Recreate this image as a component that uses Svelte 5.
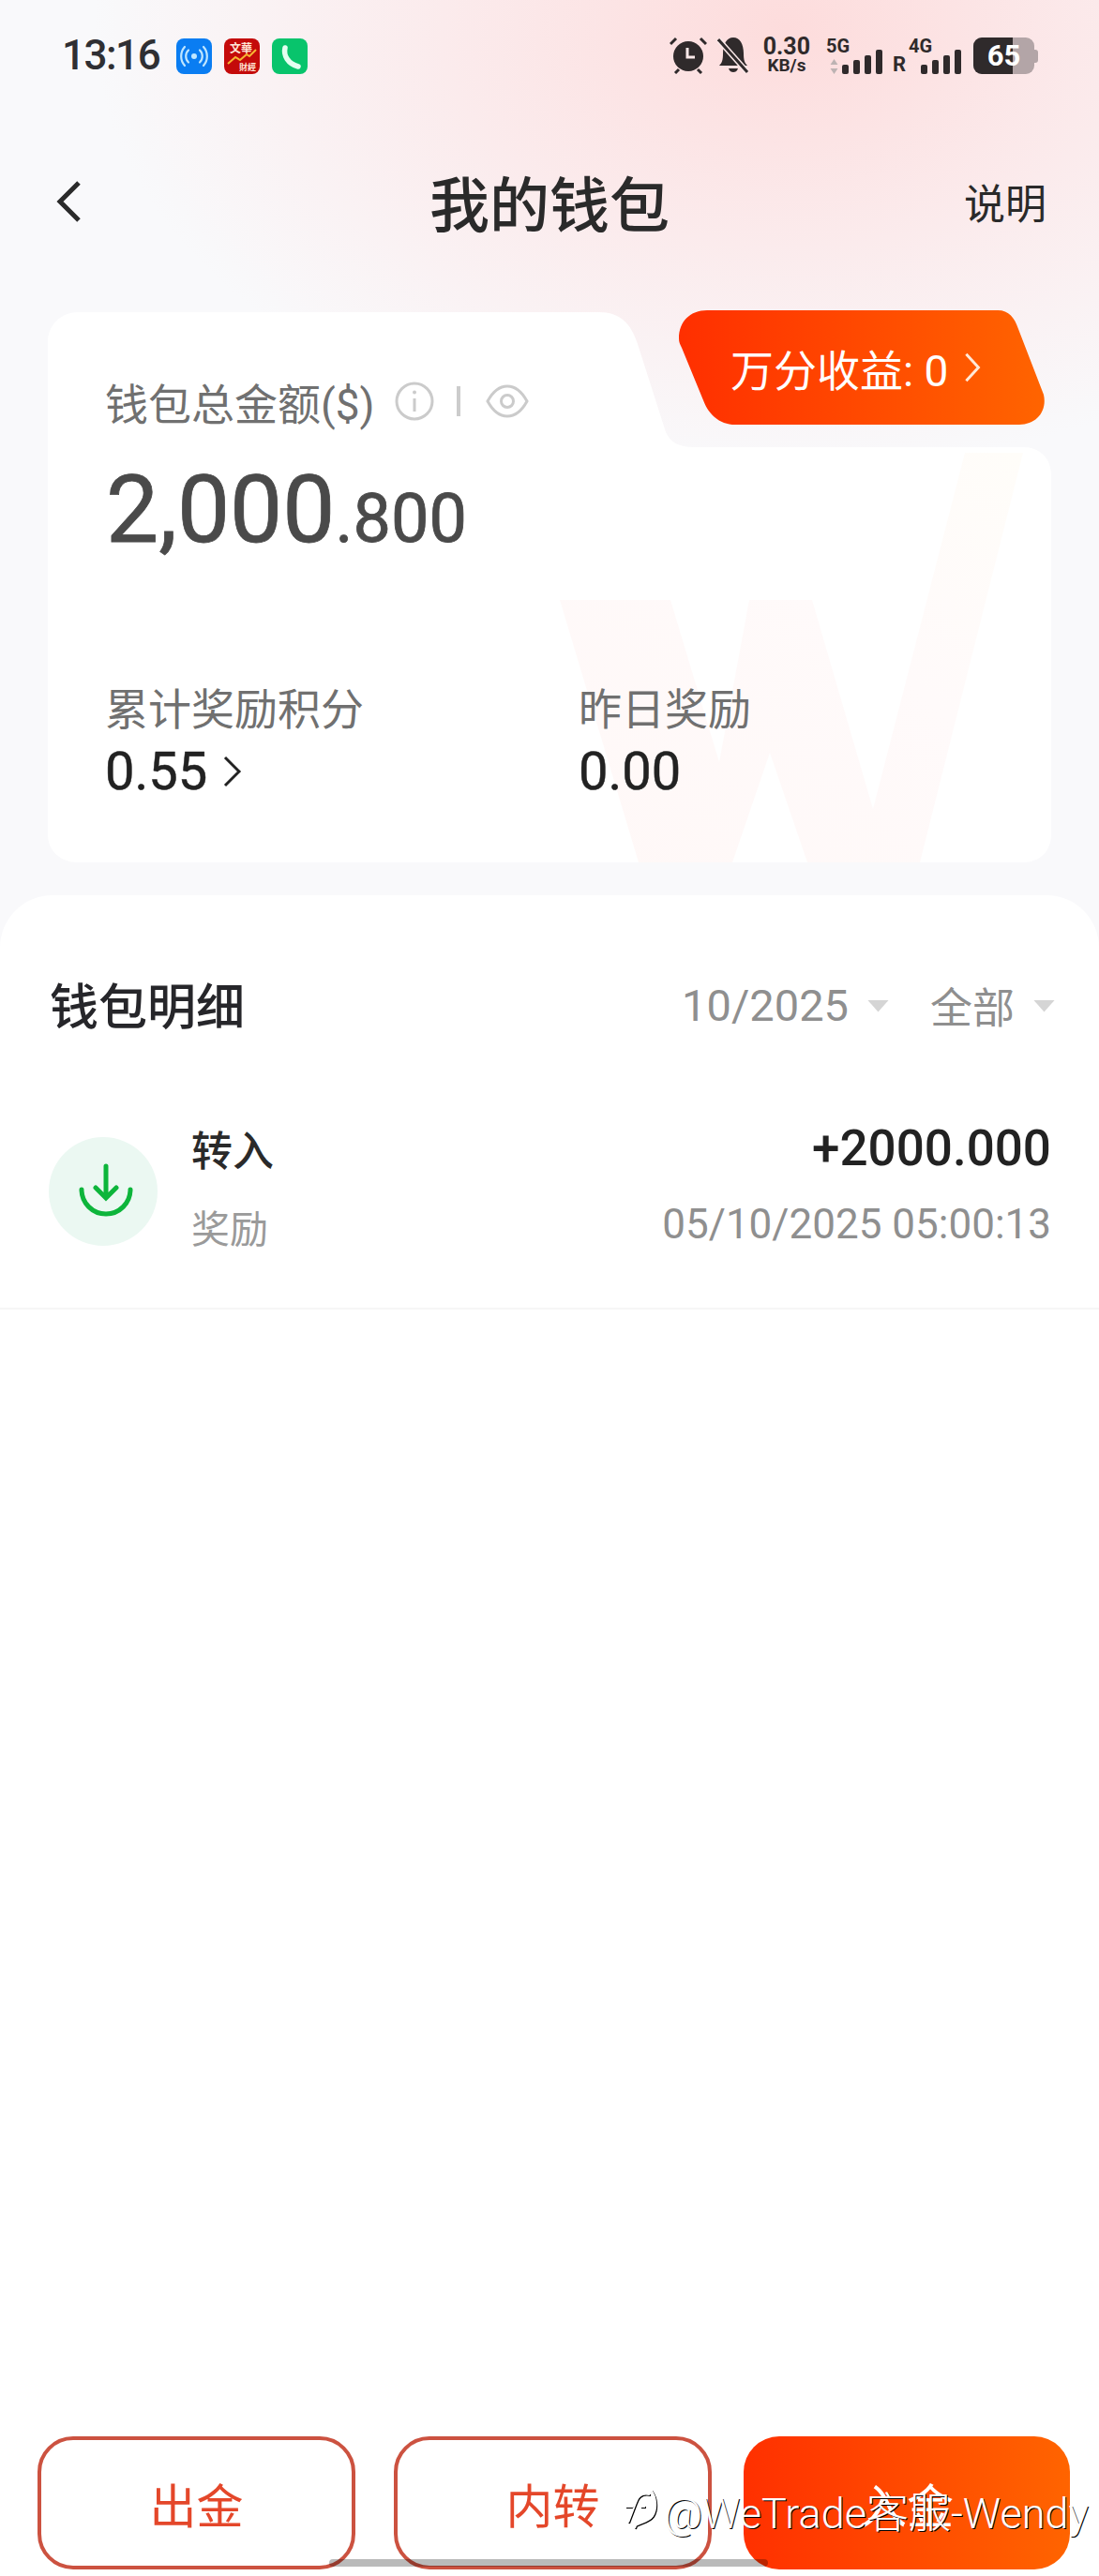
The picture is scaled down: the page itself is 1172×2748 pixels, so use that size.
<script lang="ts">
  // wallet page, static data
  const rows = [
    { title: '转入', sub: '奖励', amount: '+2000.000', time: '05/10/2025 05:00:13' }
  ]
  const bars = [10, 15, 20, 26]
</script>

<div class="page">
  <div class="status">
    <span class="time">13:16</span>
    <div class="app-icons">
      <svg class="app" viewBox="0 0 38 38">
        <rect width="38" height="38" rx="8" fill="#0a7df2" />
        <circle cx="19" cy="19" r="3" fill="#bfe6ff" />
        <path d="M13 12.500a9 9 0 0 0 0 13M25 12.500a9 9 0 0 1 0 13M9 9a15 15 0 0 0 0 20M29 9a15 15 0 0 1 0 20" fill="none" stroke="#bfe6ff" stroke-width="2.200" stroke-linecap="round" />
      </svg>
      <svg class="app" viewBox="0 0 38 38">
        <rect width="38" height="38" rx="8" fill="#c40a0a" />
        <text x="18" y="15" class="app-text" text-anchor="middle">文華</text>
        <path d="M4 27l8-7 5 3 7-6 3 2 7-7" fill="none" stroke="#f7b733" stroke-width="2" />
        <text x="25" y="34" class="app-text small" text-anchor="middle">財經</text>
      </svg>
      <svg class="app" viewBox="0 0 38 38">
        <rect width="38" height="38" rx="8" fill="#08c46c" />
        <path d="M14 10C12 18 17 27 28 30" fill="none" stroke="#e4fff1" stroke-width="5.500" stroke-linecap="round" />
      </svg>
    </div>
    <div class="sys">
      <svg class="alarm" viewBox="0 0 40 40">
        <circle cx="20" cy="21" r="16" fill="#2f2a2b" />
        <path d="M19 12v10h8" fill="none" stroke="#fbe9e9" stroke-width="3" />
        <path d="M1 8l6-6M39 8l-6-6M6 39l4-4M34 39l-4-4" stroke="#2f2a2b" stroke-width="3" />
      </svg>
      <svg class="bell" viewBox="0 0 34 40">
        <path d="M2 31c3-3 4-6 4-13C6 8 10 1 17 1s11 7 11 17c0 7 1 10 4 13z" fill="#2f2a2b" />
        <path d="M12 34h10c-1 3-3 4-5 4s-4-1-5-4z" fill="#2f2a2b" />
        <path d="M1 3l31 35" stroke="#fbe9e9" stroke-width="6" />
        <path d="M1 3l31 35" stroke="#2f2a2b" stroke-width="3" />
      </svg>
      <div class="speed">
        <span class="speed-num">0.30</span>
        <span class="speed-unit">KB/s</span>
      </div>
      <div class="sim">
        <span class="gen">5G</span>
        <div class="signal">
          <svg class="updown" viewBox="0 0 9 16">
            <path d="M4.500 0l4 6h-8zM4.500 16l4-6h-8z" fill="#bdb3b3" />
          </svg>
          {#each bars as h}
            <i style="height:{h}px"></i>
          {/each}
        </div>
      </div>
      <span class="roam">R</span>
      <div class="sim four">
        <span class="gen">4G</span>
        <div class="signal">
          {#each bars as h}
            <i style="height:{h}px"></i>
          {/each}
        </div>
      </div>
      <div class="battery">
        <div class="level"></div>
        <span>65</span>
      </div>
      <i class="nub"></i>
    </div>
  </div>

  <header class="nav">
    <svg class="back" viewBox="0 0 28 46">
      <path d="M25 3L5 23l20 20" fill="none" stroke="#2a2a2a" stroke-width="5" />
    </svg>
    <h1>我的钱包</h1>
    <span class="help">说明</span>
  </header>

  <section class="card">
    <svg class="card-bg" viewBox="0 0 1070 587">
      <defs>
        <linearGradient id="wm" x1="0" y1="1" x2="1" y2="0">
          <stop offset="0" stop-color="#fff8f7" />
          <stop offset="0.6" stop-color="#fffafa" />
          <stop offset="1" stop-color="#fffdf9" />
        </linearGradient>
      </defs>
      <path d="M32 0H588c22 0 34 12 41 34l30 94c5 11 14 16 30 16H1040c18 0 30 12 30 30V557c0 18-12 30-30 30H32c-18 0-32-12-32-30V32C0 14 14 0 32 0z" fill="#fff" />
      <path d="M546 307H664L716 480L748 307H815L880 530L978 150H1040L930 587H810L770 470L730 587H630z" fill="url(#wm)" />
    </svg>

    <a class="earn">
      <span>万分收益: 0</span>
      <svg viewBox="0 0 16 30"><path d="M2 3l11 12L2 27" fill="none" stroke="#ffe9d8" stroke-width="2.500" /></svg>
    </a>

    <div class="total-label">
      <span>钱包总金额($)</span>
      <svg class="info" viewBox="0 0 42 42">
        <circle cx="21" cy="21" r="19" fill="none" stroke="#cbcbcb" stroke-width="3" />
        <path d="M21 18v14" stroke="#cbcbcb" stroke-width="3" />
        <circle cx="21" cy="11.500" r="2" fill="#cbcbcb" />
      </svg>
      <i class="vline"></i>
      <svg class="eye" viewBox="0 0 46 36">
        <path d="M2 18C8 7 15 2 23 2s15 5 21 16c-6 11-13 16-21 16S8 29 2 18z" fill="none" stroke="#cbcbcb" stroke-width="3" />
        <circle cx="23" cy="18" r="6.500" fill="none" stroke="#cbcbcb" stroke-width="3" />
      </svg>
    </div>
    <div class="total"><b>2,000</b><small>.800</small></div>

    <div class="stats">
      <div>
        <p class="stat-label">累计奖励积分</p>
        <p class="stat-val">0.55
          <svg viewBox="0 0 22 36"><path d="M3 3l15 15L3 33" fill="none" stroke="#222" stroke-width="3" /></svg>
        </p>
      </div>
      <div>
        <p class="stat-label">昨日奖励</p>
        <p class="stat-val">0.00</p>
      </div>
    </div>
  </section>

  <main class="sheet">
    <div class="sheet-head">
      <h2>钱包明细</h2>
      <div class="filters">
        <span>10/2025</span><i class="tri"></i>
        <span class="all">全部</span><i class="tri"></i>
      </div>
    </div>

    {#each rows as row}
      <div class="row">
        <div class="row-icon">
          <svg viewBox="0 0 60 60">
            <path d="M30 3v33M19 26l11 11 11-11" fill="none" stroke="#0db53b" stroke-width="5" stroke-linecap="round" />
            <path d="M4 28a26 26 0 0 0 52 0" fill="none" stroke="#0db53b" stroke-width="5" stroke-linecap="round" />
          </svg>
        </div>
        <div class="row-text">
          <span class="row-title">{row.title}</span>
          <span class="row-sub">{row.sub}</span>
        </div>
        <div class="row-right">
          <span class="row-amount">{row.amount}</span>
          <span class="row-time">{row.time}</span>
        </div>
      </div>
    {/each}

    <footer class="actions">
      <button class="ghost">出金</button>
      <button class="ghost">内转</button>
      <button class="solid">入金</button>
    </footer>
  </main>

  <i class="home-bar"></i>
  <div class="mark">
    <svg viewBox="0 0 36 44">
      <path d="M26 5C18 3 13 7 11 14L3 35M0 18H8M16 18h5M27 0C33 8 34 20 29 28C25 34 16 35 11 38L10 41" fill="none" stroke="#fff" stroke-width="2" />
    </svg>
    <span>@WeTrade客服-Wendy</span>
  </div>
</div>

<style>
  :global(body) {
    margin: 0;
    background: #fff;
  }

  .page {
    position: relative;
    display: flex;
    flex-direction: column;
    width: 1172px;
    height: 2748px;
    overflow: hidden;
    font-family: Roboto, "Noto Sans CJK SC", sans-serif;
    color: #2a2a2a;
    background:
      radial-gradient(740px 470px at 840px 30px, #fddcdc 0%, rgba(252, 228, 229, 0.8) 40%, rgba(249, 245, 247, 0) 100%),
      linear-gradient(#f9f9fb, #f9f9fb);
    background-size: 100% 1100px;
    background-repeat: no-repeat;
  }

  .status {
    display: flex;
    align-items: center;
    height: 39px;
    padding: 40px 65px 0 66px;
  }

  .time {
    width: 122px;
    font-size: 44px;
    font-weight: 500;
    letter-spacing: -1.500px;
    line-height: 39px;
    color: #2f2f33;
  }

  .app-icons {
    display: flex;
    gap: 13px;
  }

  .app {
    display: block;
    width: 38px;
    height: 38px;
  }

  .app-text {
    font-size: 12px;
    font-weight: 700;
    font-family: "Noto Sans CJK TC", sans-serif;
    fill: #ffe6d8;
  }

  .app-text.small {
    font-size: 9px;
  }

  .sys {
    display: flex;
    align-items: flex-end;
    height: 39px;
    margin-left: auto;
    color: #2f2a2b;
    font-weight: 700;
  }

  .alarm {
    width: 40px;
    height: 40px;
  }

  .bell {
    width: 34px;
    height: 40px;
    margin-left: 11px;
  }

  .speed {
    display: flex;
    flex-direction: column;
    align-items: center;
    width: 50px;
    margin-left: 15px;
  }

  .speed-num {
    font-size: 25px;
    line-height: 22px;
  }

  .speed-unit {
    font-size: 19px;
    line-height: 18px;
  }

  .sim {
    display: flex;
    flex-direction: column;
    width: 60px;
    margin-left: 17px;
  }

  .sim.four {
    width: 56px;
    margin-left: 3px;
  }

  .gen {
    position: relative;
    top: 1px;
    height: 0;
    font-size: 20px;
    line-height: 16px;
  }

  .signal {
    display: flex;
    align-items: flex-end;
    justify-content: flex-end;
    gap: 5px;
    height: 39px;
  }

  .signal i {
    width: 7px;
    border-radius: 2px;
    background: #2f2a2b;
  }

  .updown {
    width: 9px;
    height: 16px;
    margin-right: -1px;
  }

  .roam {
    margin-left: 11px;
    font-size: 22px;
    line-height: 20px;
  }

  .battery {
    position: relative;
    width: 65px;
    height: 39px;
    margin-left: 13px;
    border-radius: 9px;
    overflow: hidden;
    background: #b3a5a7;
    text-align: center;
  }

  .level {
    position: absolute;
    inset: 0 23px 0 0;
    background: #2f2a2b;
  }

  .battery span {
    position: relative;
    font-size: 31px;
    line-height: 39px;
    color: #fff;
  }

  .nub {
    align-self: center;
    width: 4px;
    height: 14px;
    border-radius: 0 3px 3px 0;
    background: #b3a5a7;
  }

  .nav {
    position: relative;
    display: flex;
    align-items: center;
    justify-content: space-between;
    height: 80px;
    margin-top: 96px;
    padding: 0 56px 0 59px;
  }

  .back {
    width: 28px;
    height: 46px;
  }

  h1 {
    position: absolute;
    left: 0;
    right: 0;
    margin: -2px 0 0;
    text-align: center;
    font-size: 64px;
    font-weight: 500;
    color: #2a2a2a;
  }

  .help {
    font-size: 44px;
    color: #2a2a2a;
  }

  .card {
    position: relative;
    box-sizing: border-box;
    height: 587px;
    margin: 78px 51px 0;
    padding: 70px 0 0 61px;
  }

  .card-bg {
    position: absolute;
    inset: 0;
    width: 100%;
    height: 100%;
  }

  .earn {
    position: absolute;
    top: -2px;
    left: 673px;
    display: flex;
    align-items: center;
    gap: 17px;
    box-sizing: border-box;
    width: 390px;
    height: 122px;
    padding-left: 55px;
    color: #fff;
    font-size: 46px;
    background: linear-gradient(90deg, #ff2f00, #ff6400);
    clip-path: path('M0 30C0 12 12 0 30 0H340C352 0 358 8 362 20L389 90C393 108 381 122 363 122H60C44 122 32 112 26 96L3 40C1 36 0 34 0 30z');
  }

  .earn svg {
    width: 19px;
    height: 36px;
  }

  .total-label {
    position: relative;
    display: flex;
    align-items: center;
    height: 50px;
    font-size: 46px;
    color: #707070;
  }

  .info {
    width: 42px;
    height: 42px;
    margin-left: 21px;
  }

  .vline {
    width: 4px;
    height: 32px;
    margin-left: 24px;
    background: #cccccc;
  }

  .eye {
    width: 46px;
    height: 36px;
    margin-left: 27px;
  }

  .total {
    position: relative;
    margin-top: 46px;
    margin-left: 1px;
    line-height: 90px;
    color: #4a4a4a;
    -webkit-text-stroke: 0.8px #4a4a4a;
  }

  .total b {
    font-size: 100px;
    font-weight: 400;
  }

  .total small {
    font-size: 72px;
    font-weight: 400;
  }

  .stats {
    position: relative;
    display: grid;
    grid-template-columns: 505px 1fr;
    margin-top: 113px;
  }

  .stat-label {
    margin: 0;
    font-size: 46px;
    line-height: 52px;
    color: #707070;
  }

  .stat-val {
    display: flex;
    align-items: center;
    gap: 16px;
    margin: 10px 0 0;
    font-size: 56px;
    line-height: 60px;
    font-weight: 400;
    color: #222;
    -webkit-text-stroke: 0.5px #222;
  }

  .stat-val svg {
    width: 22px;
    height: 36px;
  }

  .sheet {
    display: flex;
    flex: 1;
    flex-direction: column;
    margin-top: 35px;
    border-radius: 56px 56px 0 0;
    background: #fff;
  }

  .sheet-head {
    display: flex;
    align-items: center;
    justify-content: space-between;
    height: 60px;
    padding: 85px 47px 0 53px;
  }

  h2 {
    margin: 0;
    font-size: 52px;
    font-weight: 500;
    color: #26262a;
  }

  .filters {
    display: flex;
    align-items: center;
    margin-top: 4px;
    font-size: 47px;
    color: #8f8f8f;
  }

  .all {
    margin-left: 44px;
  }

  .filters .all {
    font-size: 45px;
  }

  .tri {
    width: 23px;
    height: 13px;
    margin-left: 20px;
    margin-top: 2px;
    background: #d5d5d5;
    clip-path: polygon(0 0, 100% 0, 50% 100%);
  }

  .row {
    display: flex;
    align-items: center;
    box-sizing: border-box;
    height: 251px;
    margin-top: 46px;
    padding: 0 51px 0 52px;
    border-bottom: 2px solid #f6f6f6;
  }

  .row-icon {
    display: flex;
    align-items: center;
    justify-content: center;
    width: 116px;
    height: 116px;
    border-radius: 50%;
    background: #ebf8f2;
  }

  .row-icon svg {
    width: 60px;
    height: 60px;
    margin-left: 5px;
  }

  .row-text {
    display: flex;
    flex-direction: column;
    gap: 28px;
    margin-left: 36px;
    padding-bottom: 6px;
  }

  .row-title {
    font-size: 44px;
    line-height: 60px;
    font-weight: 500;
  }

  .row-sub {
    font-size: 41px;
    line-height: 50px;
    color: #9a9a9a;
  }

  .row-right {
    display: flex;
    flex-direction: column;
    align-items: flex-end;
    gap: 25px;
    margin-left: auto;
    padding-bottom: 14px;
  }

  .row-amount {
    font-size: 53px;
    line-height: 60px;
    font-weight: 500;
    color: #222;
  }

  .row-time {
    font-size: 44px;
    line-height: 52px;
    color: #8f8f8f;
  }

  .actions {
    display: grid;
    grid-template-columns: 339px 339px 348px;
    column-gap: 41px;
    margin: auto 0 7px 40px;
  }

  .actions button {
    height: 142px;
    border-radius: 38px;
    font-family: inherit;
    font-size: 50px;
  }

  .ghost {
    border: 4px solid #cc5240;
    background: #fff;
    color: #e4472a;
  }

  .solid {
    width: 348px;
    margin-left: -7px;
    border: 0;
    color: #fff;
    background: linear-gradient(90deg, #ff3000, #ff6400);
  }

  .home-bar {
    position: absolute;
    left: 351px;
    top: 2730px;
    width: 468px;
    height: 8px;
    border-radius: 4px;
    background: rgba(0, 0, 0, 0.27);
  }

  .mark {
    position: absolute;
    left: 667px;
    top: 2645px;
    display: flex;
    align-items: center;
    gap: 5px;
    color: #fff;
    font-size: 45px;
    font-weight: 300;
    white-space: nowrap;
    text-shadow: 1px 1px 0 #000;
  }

  .mark svg {
    width: 36px;
    height: 44px;
    filter: drop-shadow(1px 1px 0 #000);
  }
</style>
